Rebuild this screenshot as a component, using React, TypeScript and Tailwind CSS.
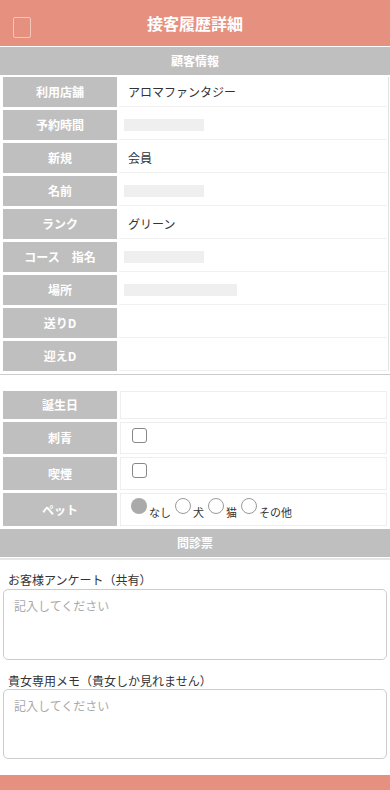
import React from "react";

const font = { fontFamily: '"Noto Sans CJK JP", "Noto Sans", sans-serif' };

function Bar({ w }: { w: number }) {
  return <div className="h-[12px] bg-[#efefef] ml-[5px]" style={{ width: w }} />;
}

const rows1: { label: string; value?: string; bar?: number }[] = [
  { label: "利用店舗", value: "アロマファンタジー" },
  { label: "予約時間", bar: 80 },
  { label: "新規", value: "会員" },
  { label: "名前", bar: 80 },
  { label: "ランク", value: "グリーン" },
  { label: "コース　指名", bar: 80 },
  { label: "場所", bar: 113 },
  { label: "送りD" },
  { label: "迎えD" },
];

function Radio({ checked, label }: { checked?: boolean; label: string }) {
  return (
    <div className="flex items-end">
      {checked ? (
        <span className="block w-[16px] h-[16px] rounded-full bg-[#aaaaaa]" />
      ) : (
        <span className="block w-[16px] h-[16px] rounded-full border border-[#9a9a9a] bg-white" />
      )}
      <span className="text-[11px] leading-[12px] text-[#333] ml-[2px] -mb-[4px]">{label}</span>
    </div>
  );
}

function Check() {
  return <span className="block w-[15px] h-[15px] rounded-[3px] border border-[#888] bg-white" />;
}

export default function App() {
  return (
    <div className="w-[390px] h-[790px] bg-white overflow-hidden" style={font}>
      {/* header */}
      <div className="relative h-[46px] bg-[#e6917f] flex items-center justify-center">
        <div className="absolute left-[13px] top-[17px] w-[18px] h-[21px] rounded-[2px] border border-[#f3c6bc]" />
        <span className="text-white text-[16px] font-bold leading-none">接客履歴詳細</span>
      </div>
      <div className="mt-[1px] h-[28px] bg-[#bfbfbf] flex items-center justify-center">
        <span className="text-white text-[12px] font-bold">顧客情報</span>
      </div>

      {/* table 1 */}
      <div className="mt-[2px] border-b border-[#cccccc]">
        <div className="flex flex-col gap-[3px] border-r border-[#e2e2e2] mr-[1px]">
          {rows1.map((r) => (
            <div key={r.label} className="flex h-[30px]">
              <div className="ml-[3px] w-[114px] bg-[#bfbfbf] flex items-center justify-center text-white text-[12px] font-bold">
                {r.label}
              </div>
              <div className="ml-[2px] w-[268px] border-b border-[#f0f0f0] flex items-center">
                {r.value && <span className="pl-[9px] text-[12px] text-[#333]">{r.value}</span>}
                {r.bar && <Bar w={r.bar} />}
              </div>
            </div>
          ))}
        </div>
        <div className="h-[3px]" />
      </div>

      {/* table 2 */}
      <div className="mt-[16px] flex flex-col gap-[3px]">
        <div className="flex h-[28px]">
          <div className="ml-[3px] w-[114px] bg-[#bfbfbf] flex items-center justify-center text-white text-[12px] font-bold">誕生日</div>
          <div className="ml-[3px] w-[267px] border border-[#eeeeee]" />
        </div>
        <div className="flex h-[32px]">
          <div className="ml-[3px] w-[114px] bg-[#bfbfbf] flex items-center justify-center text-white text-[12px] font-bold">刺青</div>
          <div className="ml-[3px] w-[267px] border border-[#eeeeee] pl-[11px] pt-[5px]">
            <Check />
          </div>
        </div>
        <div className="flex h-[33px]">
          <div className="ml-[3px] w-[114px] bg-[#bfbfbf] flex items-center justify-center text-white text-[12px] font-bold">喫煙</div>
          <div className="ml-[3px] w-[267px] border border-[#eeeeee] pl-[11px] pt-[5px]">
            <Check />
          </div>
        </div>
        <div className="flex h-[33px]">
          <div className="ml-[3px] w-[114px] bg-[#bfbfbf] flex items-center justify-center text-white text-[12px] font-bold">ペット</div>
          <div className="ml-[3px] w-[267px] border border-[#eeeeee] pl-[10px] pt-[4px] flex gap-[4px] items-start">
            <Radio checked label="なし" />
            <Radio label="犬" />
            <Radio label="猫" />
            <Radio label="その他" />
          </div>
        </div>
        <div className="h-[28px] bg-[#bfbfbf] flex items-center justify-center">
          <span className="text-white text-[12px] font-bold">問診票</span>
        </div>
      </div>
      <div className="mt-[1px] h-[2px] bg-[#e6e6e6]" />

      {/* questionnaire */}
      <div className="px-[3px]">
        <div className="pt-[12px] pl-[5px] text-[12px] leading-[16px] text-[#333]">お客様アンケート（共有）</div>
        <textarea
          readOnly
          placeholder="記入してください"
          className="mt-[1px] block w-[384px] h-[71px] rounded-[5px] border border-[#cccccc] px-[10px] py-[8px] text-[12px] leading-[16px] resize-none placeholder:text-[#aaaaaa] outline-none"
          style={font}
        />
        <div className="mt-[13px] pl-[5px] text-[12px] leading-[16px] text-[#333]">貴女専用メモ（貴女しか見れません）</div>
        <textarea
          readOnly
          placeholder="記入してください"
          className="block w-[384px] h-[70px] rounded-[5px] border border-[#cccccc] px-[10px] py-[8px] text-[12px] leading-[16px] resize-none placeholder:text-[#aaaaaa] outline-none"
          style={font}
        />
      </div>
      <div className="mt-[16px] h-[30px] bg-[#e6917f]" />
    </div>
  );
}
